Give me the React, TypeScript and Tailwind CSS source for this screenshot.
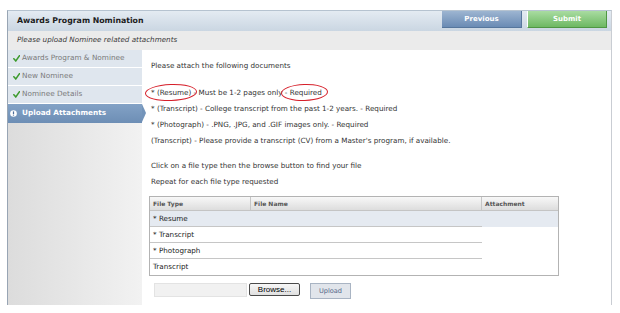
import type { ReactNode } from "react";

function Check() {
  return (
    <svg width="7" height="7" viewBox="0 0 8 8" className="shrink-0">
      <path d="M1 4.2 L3.2 6.8 L7.4 0.8" stroke="#3d9b2d" strokeWidth="1.7" fill="none" strokeLinecap="round" />
    </svg>
  );
}

function InfoDot() {
  return (
    <svg width="7" height="7" viewBox="0 0 8 8" className="shrink-0">
      <circle cx="4" cy="4" r="3.8" fill="#ffffff" />
      <rect x="3.3" y="1.6" width="1.4" height="3" fill="#4d6d98" />
      <rect x="3.3" y="5.3" width="1.4" height="1.1" fill="#4d6d98" />
    </svg>
  );
}

// red hand-drawn ring over a phrase
function Circled({ children, left, right }: { children: ReactNode; left: string; right: string }) {
  return (
    <span className="relative">
      {children}
      <span
        className={`absolute -top-[4px] -bottom-[4px] rounded-[50%] border-[1.5px] border-[#d61f2a] -rotate-2 ${left} ${right}`}
      />
    </span>
  );
}

function NavItem({ label }: { label: string }) {
  return (
    <div className="h-[18px] flex items-center gap-[2px] pl-[5px] bg-[#dfe6ee] border-b border-white text-[#7a7a7a] text-[7.3px]">
      <Check />
      <span>{label}</span>
    </div>
  );
}

const rows = ["* Resume", "* Transcript", "* Photograph", "Transcript"];

export default function App() {
  return (
    <div className="w-[620px] h-[313px] bg-white pt-[10px] pl-[7px] font-['DejaVu_Sans',Verdana,sans-serif] text-[7.2px] text-[#333]">
      <div className="w-[605px] h-[295px] flex flex-col border-l border-r border-t border-l-[#98a5b4] border-r-[#c9cdd3] border-t-[#b6c3d0]">
        {/* Header */}
        <div className="h-[20px] flex items-start justify-between bg-gradient-to-b from-[#e4ebf2] to-[#cad6e2] pr-[4px]">
          <h1 className="self-center pl-[9px] font-bold text-[7.8px] text-[#1c1c1c]">Awards Program Nomination</h1>
          <div className="flex gap-[5px]">
            <button className="w-[80px] h-[17px] bg-gradient-to-b from-[#9db5d1] to-[#6a8bb4] border-r border-b border-[#56769c] text-white font-bold text-[7px]">
              Previous
            </button>
            <button className="w-[80px] h-[17px] bg-gradient-to-b from-[#a9dca1] to-[#6db862] border-l border-l-white border-r border-b border-r-[#4f9643] border-b-[#4f9643] text-white font-bold text-[7px]">
              Submit
            </button>
          </div>
        </div>

        {/* Sub header */}
        <div className="h-[19px] flex items-center pl-[9px] bg-[#ebebeb] italic text-[#3a3a3a]">
          Please upload Nominee related attachments
        </div>

        <div className="flex flex-1">
          {/* Steps */}
          <div className="w-[134px] flex flex-col">
            <NavItem label="Awards Program & Nominee" />
            <NavItem label="New Nominee" />
            <NavItem label="Nominee Details" />
            <div className="relative h-[19px] flex items-center gap-[5px] pl-[2px] bg-gradient-to-b from-[#83a2c6] to-[#6d8eb5] text-white font-bold text-[7.3px]">
              <InfoDot />
              <span>Upload Attachments</span>
              <span className="absolute -right-[4px] top-0 border-l-[4px] border-l-[#7394ba] border-y-[9.5px] border-y-transparent" />
            </div>
            <div className="flex-1 bg-gradient-to-r from-[#dcdcdc] to-[#f2f2f2]" />
          </div>

          {/* Content */}
          <div className="flex-1 bg-white pl-[9px] pt-[8px] leading-[16px]">
            <p>Please attach the following documents</p>
            <p className="mt-[11px]">
              <Circled left="-left-[6px]" right="-right-[6px]">* (Resume)</Circled> - Must be 1-2 pages only{" "}
              <Circled left="-left-[4px]" right="-right-[6px]">- Required</Circled>
            </p>
            <p>* (Transcript) - College transcript from the past 1-2 years. - Required</p>
            <p>* (Photograph) - .PNG, .JPG, and .GIF images only. - Required</p>
            <p>(Transcript) - Please provide a transcript (CV) from a Master's program, if available.</p>
            <p className="mt-[9px]">Click on a file type then the browse button to find your file</p>
            <p>Repeat for each file type requested</p>

            {/* Attachments table */}
            <div className="mt-[6px] -ml-[2px] w-[410px] border border-[#b3b3b3] leading-none">
              <div className="h-[14px] flex bg-gradient-to-b from-[#f8f8f8] to-[#dddddd] border-b border-[#c4c4c4] font-bold text-[6px] text-[#555]">
                <div className="w-[101px] flex items-center pl-[3px] border-r border-[#c6c6c6]">File Type</div>
                <div className="w-[231px] flex items-center pl-[3px] border-r border-[#c6c6c6]">File Name</div>
                <div className="flex-1 flex items-center pl-[3px]">Attachment</div>
              </div>
              {rows.map((r, i) => (
                <div key={i} className={`h-[16px] flex ${i === 0 ? "bg-[#e5eaf1]" : ""}`}>
                  <div
                    className={`w-[332px] flex items-center pl-[3px] text-[#222] ${i < rows.length - 1 ? "border-b border-[#c6c6c6]" : ""}`}
                  >
                    {r}
                  </div>
                </div>
              ))}
            </div>

            {/* Upload controls */}
            <div className="mt-[7px] ml-[3px] flex items-start leading-none">
              <div className="w-[93px] h-[14px] bg-[#f1f1f1] border border-[#e3e3e3]" />
              <button className="ml-[2px] w-[51px] h-[13px] border border-[#4a4a4a] rounded-[2px] bg-gradient-to-b from-[#f7f7f7] to-[#e0e0e0] font-['Liberation_Sans',Arial,sans-serif] text-[8px] text-black">
                Browse...
              </button>
              <button className="ml-[10px] w-[41px] h-[16px] border border-[#a9b4c3] bg-[#e1e5eb] text-[6.6px] text-[#56698a]">
                Upload
              </button>
            </div>
          </div>
        </div>
      </div>
    </div>
  );
}
